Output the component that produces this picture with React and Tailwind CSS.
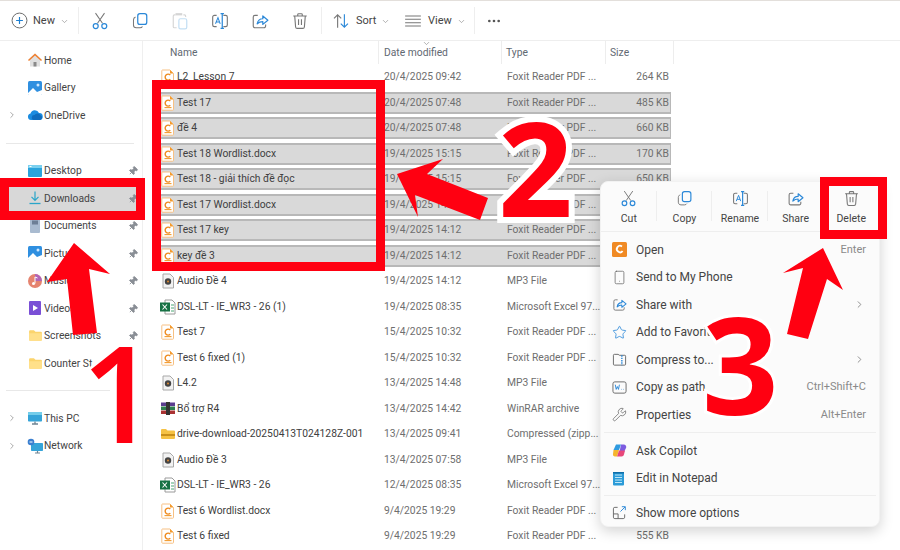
import React from "react";
import { ChevronDown, ChevronRight, Pin, Smartphone, Star, Wrench, MoreHorizontal } from "lucide-react";

const Sv = ({ s = 16, v = 16, className = "", children }) => (
  <svg width={s} height={s} viewBox={`0 0 ${v} ${v}`} fill="none" className={"shrink-0 " + className}>{children}</svg>
);

const PlusC = () => (
  <Sv s={17}><circle cx="8" cy="8" r="7" stroke="#666" strokeWidth=".9"/><path d="M8 4.800v6.400M4.800 8h6.400" stroke="#1d7fd1" strokeWidth="1.100"/></Sv>
);
const Cut = ({ s = 18 }) => (
  <Sv s={s}><path d="M4 1l6.200 9M12 1L5.800 10" stroke="#777" strokeWidth=".9"/><circle cx="4.200" cy="12.500" r="2.200" stroke="#2b88d8" strokeWidth="1.100"/><circle cx="11.800" cy="12.500" r="2.200" stroke="#2b88d8" strokeWidth="1.100"/></Sv>
);
const CopyI = ({ s = 18 }) => (
  <Sv s={s}><rect x="6" y="1.500" width="8" height="9.500" rx="2" stroke="#2b88d8" strokeWidth="1.100"/><path d="M4 4.500C2.800 5 2.200 5.800 2.200 7v4.500c0 1.500 1 2.500 2.500 2.500H8c1 0 1.800-.5 2.200-1.200" stroke="#777" strokeWidth=".9"/></Sv>
);
const Paste = () => (
  <Sv s={18}><path d="M4 2.500H3a1 1 0 0 0-1 1V13a1 1 0 0 0 1 1h2" stroke="#d5d5d5"/><path d="M4.500 2.500V1.500h5v1h-5z" stroke="#d5d5d5"/><path d="M11 2.500h1a1 1 0 0 1 1 1v1" stroke="#d5d5d5"/><rect x="7" y="6" width="7" height="9" rx="1.500" stroke="#c4dff4" strokeWidth="1.100"/></Sv>
);
const Rename = ({ s = 18 }) => (
  <Sv s={s}><path d="M5 3H3a1.500 1.500 0 0 0-1.500 1.500v7A1.500 1.500 0 0 0 3 13h2M11 3h2a1.500 1.500 0 0 1 1.500 1.500v7A1.500 1.500 0 0 1 13 13h-2" stroke="#777"/><path d="M10 1.500v13M8.500 1.500h3M8.500 14.500h3" stroke="#2b88d8" strokeWidth="1.100"/><path d="M4 10.500L6.200 5l2 5.500M4.800 8.800h2.800" stroke="#2b88d8" strokeWidth=".9"/></Sv>
);
const ShareI = ({ s = 18 }) => (
  <Sv s={s}><path d="M6 3H3.500A1.500 1.500 0 0 0 2 4.500v8A1.500 1.500 0 0 0 3.500 14h8a1.500 1.500 0 0 0 1.500-1.500V11" stroke="#777"/><path d="M5.500 10.500C6 7.500 8 6 10.500 6V3.500L15 7.300l-4.500 3.700V8.500c-2 0-3.500.5-5 2z" stroke="#2b88d8" strokeWidth="1.100" strokeLinejoin="round"/></Sv>
);
const Trash = ({ s = 18 }) => (
  <Sv s={s}><path d="M2 3.500h12M6 3.500V2.200c0-.4.3-.7.7-.7h2.600c.4 0 .7.3.7.7v1.300" stroke="#777"/><path d="M3.300 3.500l.8 9.800c.1.700.6 1.200 1.300 1.200h5.200c.7 0 1.200-.5 1.300-1.200l.8-9.800" stroke="#777"/><path d="M6.700 6.500v5M9.300 6.500v5" stroke="#777"/></Sv>
);
const SortI = () => (
  <Sv s={18}><path d="M5 14V2.500M1.800 5.700L5 2.500l3.200 3.200" stroke="#777"/><path d="M11 2v11.500M7.800 10.300l3.200 3.200 3.200-3.200" stroke="#2b88d8"/></Sv>
);
const ViewI = () => (
  <Sv s={18}><path d="M1 3.500h14M1 6.500h14M1 9.500h14M1 12.500h14" stroke="#777" strokeWidth=".9"/></Sv>
);

const Pdf = () => (
  <svg width="14" height="16" viewBox="0 0 14 16" className="shrink-0">
    <path d="M1.500 1h7.500l3.500 3.500v10a.7.7 0 0 1-.7.7H1.500a.7.7 0 0 1-.7-.7V1.700a.7.7 0 0 1 .7-.7z" fill="#fff" stroke="#f7c083"/>
    <path d="M9 1v3.500h3.500z" fill="#f39a2c"/>
    <path d="M9.300 6a3 3 0 1 0 0 4.200" fill="none" stroke="#ee8a1d" strokeWidth="1.400"/>
    <path d="M3.500 12.600h7" stroke="#f39a2c" strokeWidth="1.100"/>
  </svg>
);
const Mp3 = () => (
  <svg width="14" height="16" viewBox="0 0 14 16" className="shrink-0">
    <path d="M2 1h7l3.500 3.500v10.500H2z" fill="#f2f2f2" stroke="#a8a8a8"/>
    <circle cx="7" cy="8.500" r="3.200" fill="#444"/><circle cx="7" cy="8.500" r="1" fill="#e08a30"/>
  </svg>
);
const Xls = () => (
  <svg width="17" height="16" viewBox="0 0 17 16" className="shrink-0 -ml-[2px]">
    <path d="M6 1h7l3 3v11H6z" fill="#fff" stroke="#9a9a9a"/>
    <rect x="1" y="3.500" width="10" height="9" fill="#177245"/>
    <path d="M3.500 5.500l4.500 5M8 5.500l-4.500 5" stroke="#fff" strokeWidth="1.100"/>
    <path d="M12 6h3M12 9h3M12 12h3" stroke="#4aa874"/>
  </svg>
);
const Rar = () => (
  <svg width="16" height="15" viewBox="0 0 16 15" className="shrink-0 -ml-[1px]">
    <rect x="1" y="1.500" width="14" height="3.500" fill="#5b3c8f"/>
    <rect x="1" y="5.500" width="14" height="3.500" fill="#2f7d4f"/>
    <rect x="1" y="9.500" width="14" height="3.500" fill="#a33"/>
    <rect x="6" y="1" width="4" height="13" fill="#333"/>
  </svg>
);
const Folder = ({ s = 14 }) => (
  <svg width={s} height={s} viewBox="0 0 14 14" className="shrink-0">
    <path d="M1 3a1 1 0 0 1 1-1h3.500l1.500 1.500h5a1 1 0 0 1 1 1V11a1 1 0 0 1-1 1H2a1 1 0 0 1-1-1z" fill="#fbd46d"/>
    <path d="M1 5h12v6a1 1 0 0 1-1 1H2a1 1 0 0 1-1-1z" fill="#ffe08a"/>
  </svg>
);
const ZipFolder = () => (
  <svg width="16" height="14" viewBox="0 0 16 14" className="shrink-0 -ml-[1px]">
    <path d="M1 3a1 1 0 0 1 1-1h4l1.500 1.500H14a1 1 0 0 1 1 1V11a1 1 0 0 1-1 1H2a1 1 0 0 1-1-1z" fill="#f6c244"/>
    <rect x="1" y="7" width="14" height="2" fill="#c98f1a"/>
  </svg>
);

const HomeI = () => (
  <svg width="16" height="16" viewBox="0 0 16 16"><path d="M8 1.500L1 8h2v6.500h10V8h2z" fill="#e0e0e0"/><path d="M8 1.500L1 8l1 1 6-5.500L14 9l1-1z" fill="#f07f2e"/><rect x="6.500" y="10" width="3" height="4.500" fill="#8a8a8a"/></svg>
);
const GalleryI = () => (
  <svg width="16" height="16" viewBox="0 0 16 16"><rect x="1" y="1" width="14" height="14" rx="1.500" fill="#2f8fe0"/><path d="M1 13l5-5 4 4 5-2v4a1 1 0 0 1-1 1H2a1 1 0 0 1-1-1z" fill="#fff"/><circle cx="11" cy="5" r="1.500" fill="#cfe8ff"/></svg>
);
const CloudI = () => (
  <svg width="16" height="16" viewBox="0 0 16 16"><path d="M4 13a3.300 3.300 0 0 1-.5-6.500A4.500 4.500 0 0 1 12 6a3.500 3.500 0 0 1 .5 7z" fill="#1b8ce0"/><path d="M7 13a2.500 2.500 0 0 1 .5-5 3.500 3.500 0 0 1 6 .2A2.500 2.500 0 0 1 13 13z" fill="#0f6cbd"/></svg>
);
const DesktopI = () => (
  <svg width="16" height="14" viewBox="0 0 16 14"><rect x="1" y="1" width="14" height="12" rx="1" fill="#2aa3dc"/><rect x="1" y="1" width="14" height="3" fill="#7bd0ef"/><path d="M2.500 2.500h2" stroke="#fff"/></svg>
);
const DownI = () => (
  <svg width="16" height="16" viewBox="0 0 16 16"><path d="M8 1.500V10M4.500 6.800L8 10.300l3.500-3.500" stroke="#29a5c9" strokeWidth="1.200" fill="none"/><path d="M2.500 13.500h11" stroke="#29a5c9" strokeWidth="1.300"/></svg>
);
const DocsI = () => (
  <svg width="14" height="16" viewBox="0 0 14 16"><rect x="2" y="1" width="10" height="14" rx="1" fill="#a9bbd0"/><rect x="4" y="2.500" width="6" height="4" fill="#6d7f96"/></svg>
);
const MusicI = () => (
  <svg width="16" height="16" viewBox="0 0 16 16"><circle cx="8" cy="8" r="7" fill="#e5836f"/><path d="M8 1a7 7 0 0 1 7 7H8z" fill="#b065b8"/><circle cx="6.500" cy="10.500" r="1.500" fill="#fff"/><path d="M8 10.500V4l2.500 1" stroke="#fff" fill="none"/></svg>
);
const VideoI = () => (
  <svg width="14" height="16" viewBox="0 0 14 16"><rect x="1" y="1" width="12" height="14" rx="1" fill="#7a4fd6"/><path d="M5 5l5 3-5 3z" fill="#fff"/></svg>
);
const PcI = () => (
  <svg width="16" height="16" viewBox="0 0 16 16"><rect x="1" y="2" width="14" height="9.500" rx=".8" fill="#35a4d8"/><rect x="1" y="2" width="14" height="3" fill="#74cdea"/><path d="M5 14h6M8 11.500V14" stroke="#6f8493" strokeWidth="1.300"/></svg>
);
const NetI = () => (
  <svg width="17" height="16" viewBox="0 0 17 16"><rect x="4" y="5" width="12" height="8" rx=".8" fill="#35a4d8"/><path d="M8 15h5M10.500 13v2" stroke="#6f8493" strokeWidth="1.200"/><circle cx="4" cy="4" r="3.300" fill="#3a7fd0"/><path d="M2.500 4h3" stroke="#fff"/></svg>
);

const sideTop = [
  { t: "Home", i: <HomeI /> },
  { t: "Gallery", i: <GalleryI /> },
  { t: "OneDrive", i: <CloudI />, c: true },
];
const sideMid = [
  { t: "Desktop", i: <DesktopI />, p: true },
  { t: "Downloads", i: <DownI />, p: true, sel: true },
  { t: "Documents", i: <DocsI />, p: true },
  { t: "Pictures", i: <GalleryI />, p: true },
  { t: "Music", i: <MusicI />, p: true },
  { t: "Videos", i: <VideoI />, p: true },
  { t: "Screenshots", i: <Folder s={15} />, p: true },
  { t: "Counter St", i: <Folder s={15} /> },
];
const sideBot = [
  { t: "This PC", i: <PcI />, c: true },
  { t: "Network", i: <NetI />, c: true },
];

const SideRow = ({ t, i, c, p, sel }) => (
  <div className={"relative h-[27.5px] flex items-center text-[#444] " + (sel ? "bg-[#d8d8d8]" : "")}>
    <div className="w-[26px] flex justify-end pr-[9px]">
      {c && <ChevronRight size={10} color="#777" strokeWidth={1.5} />}
    </div>
    <div className="w-[18px] flex justify-center shrink-0">{i}</div>
    <span className="whitespace-nowrap">{t}</span>
    {p && <Pin size={10} fill="#8a8f96" color="#8a8f96" className="absolute left-[128px] top-[9px] rotate-45" />}
  </div>
);

const PF = "Foxit Reader PDF ...";
const rows = [
  ["L2_Lesson 7", "20/4/2025 09:42", PF, "264 KB", "pdf"],
  ["Test 17", "20/4/2025 07:48", PF, "485 KB", "pdf", 1],
  ["đề 4", "20/4/2025 07:48", PF, "660 KB", "pdf", 1],
  ["Test 18 Wordlist.docx", "19/4/2025 15:15", PF, "170 KB", "pdf", 1],
  ["Test 18 - giải thích đề đọc", "19/4/2025 15:15", PF, "650 KB", "pdf", 1],
  ["Test 17 Wordlist.docx", "19/4/2025 14:12", PF, "", "pdf", 1],
  ["Test 17 key", "19/4/2025 14:12", PF, "", "pdf", 1],
  ["key đề 3", "19/4/2025 14:12", PF, "", "pdf", 1],
  ["Audio Đề 4", "19/4/2025 14:12", "MP3 File", "", "mp3"],
  ["DSL-LT - IE_WR3 - 26 (1)", "19/4/2025 08:35", "Microsoft Excel 97...", "", "xls"],
  ["Test 7", "15/4/2025 10:32", PF, "", "pdf"],
  ["Test 6 fixed (1)", "15/4/2025 10:32", PF, "", "pdf"],
  ["L4.2", "13/4/2025 14:48", "MP3 File", "", "mp3"],
  ["Bổ trợ R4", "13/4/2025 14:42", "WinRAR archive", "", "rar"],
  ["drive-download-20250413T024128Z-001", "13/4/2025 09:41", "Compressed (zipp...", "", "zip"],
  ["Audio Đề 3", "13/4/2025 07:58", "MP3 File", "", "mp3"],
  ["DSL-LT - IE_WR3 - 26", "12/4/2025 08:35", "Microsoft Excel 97...", "", "xls"],
  ["Test 6 Wordlist.docx", "9/4/2025 19:29", PF, "", "pdf"],
  ["Test 6 fixed", "9/4/2025 19:29", PF, "555 KB", "pdf"],
];
const iconOf = { pdf: <Pdf />, mp3: <Mp3 />, xls: <Xls />, rar: <Rar />, zip: <ZipFolder /> };

const FileRow = ({ r }) => (
  <div className="h-[25.5px] flex items-center">
    <div className={"ml-[18px] w-[510px] h-[22px] flex items-center border-y-2 " + (r[5] ? "bg-[#d9d9d9] border-[#b8b8b8] border-r border-r-[#b8b8b8]" : "border-transparent")}>
      <div className="w-[16px] shrink-0 flex items-center">{iconOf[r[4]]}</div>
      <div className="w-[207px] shrink-0 whitespace-nowrap text-[#404040]">{r[0]}</div>
      <div className="w-[123px] shrink-0 whitespace-nowrap text-[#6e6e6e]">{r[1]}</div>
      <div className="w-[100px] shrink-0 whitespace-nowrap text-[#6e6e6e]">{r[2]}</div>
      <div className="w-[62px] shrink-0 text-right whitespace-nowrap text-[#6e6e6e]">{r[3]}</div>
    </div>
  </div>
);

const MenuTop = ({ i, t }) => (
  <div className="w-[56px] flex flex-col items-center justify-start pt-[8px] gap-[5px]">
    {i}
    <span className="text-[#444] text-[10.5px] leading-[14px]">{t}</span>
  </div>
);
const VSep = () => <div className="w-px h-[30px] mt-[9px] -ml-px bg-[#eeeeee]" />;

const FoxitI = () => (
  <svg width="15" height="15" viewBox="0 0 15 15"><rect width="15" height="15" rx="1.500" fill="#f08a24"/><path d="M10 4.500a3.200 3.200 0 1 0 .6 4.500" stroke="#fff" strokeWidth="1.800" fill="none"/></svg>
);
const CompressI = () => (
  <Sv s={15}><path d="M1.500 3.500a1 1 0 0 1 1-1h4l1.500 1h5.500a1 1 0 0 1 1 1V13a1 1 0 0 1-1 1h-11a1 1 0 0 1-1-1z" stroke="#666"/><path d="M10.500 3.500V14" stroke="#2b88d8" strokeWidth="1.500" strokeDasharray="1.500 1"/></Sv>
);
const PathI = () => (
  <Sv s={15}><rect x="1" y="2" width="14" height="12" rx="2" stroke="#666"/><path d="M3.500 5l1 5 1.200-3 1.200 3 1-5M10 10h.5M12 10h.5" stroke="#2b88d8"/></Sv>
);
const CopilotI = () => (
  <svg width="15" height="15" viewBox="0 0 15 15"><path d="M4 1.500h5L7 7H1.500z" fill="#2f9be0"/><path d="M9 1.500h2.500A2.500 2.500 0 0 1 14 5L12 9H7.500z" fill="#7c5ce0"/><path d="M1.500 7H7l-2 6.500H3A2 2 0 0 1 1 11z" fill="#f5b52e"/><path d="M7 7.500h6l-1 4a2.500 2.500 0 0 1-2.500 2H5z" fill="#e8477a"/></svg>
);
const NotepadI = () => (
  <svg width="13" height="15" viewBox="0 0 13 15"><rect x="1" y="1" width="11" height="13.500" rx="1" fill="#2b9bd8"/><path d="M3 4h7M3 6.500h7M3 9h7M3 11.500h7" stroke="#bfe7f7"/><path d="M1 1h11v1.500H1z" fill="#0f6ea8"/></svg>
);
const MoreI = () => (
  <Sv s={15}><path d="M6 2.500H3A1.500 1.500 0 0 0 1.500 4v9A1.500 1.500 0 0 0 3 14.500h9a1.500 1.500 0 0 0 1.500-1.500v-3" stroke="#666"/><path d="M1.500 9.500H6.500V14.500" stroke="#666"/><path d="M9 7l5-5M10.500 1.800h3.700v3.700" stroke="#2b88d8"/></Sv>
);

const MenuRow = ({ i, t, k, arrow }) => (
  <div className="h-[27.5px] flex items-center pl-[11px] relative text-[#444]">
    <div className="w-[24px] shrink-0 flex items-center">{i}</div>
    <span className="whitespace-nowrap text-[12px]">{t}</span>
    {k && <span className="absolute right-[13px] text-[#8a8a8a] text-[11px]">{k}</span>}
    {arrow && <ChevronRight size={11} color="#888" className="absolute right-[14px]" />}
  </div>
);

const Chev = () => <ChevronDown size={9} color="#999" className="ml-[5px] mt-[2px]" />;
const TBtn = ({ children }) => <div className="w-[40px] flex justify-center">{children}</div>;
const TSep = () => <div className="w-px h-[27px] bg-[#eeeeee]" />;

export default function App() {
  return (
    <div className="relative w-[900px] h-[550px] overflow-hidden bg-white text-[10.3px] [font-family:Roboto,sans-serif]">
      <div className="h-[41px] border-t border-t-[#e3dfdb] border-b border-b-[#eeeeee] flex items-center text-[#444] text-[11px]">
        <div className="w-[78px] flex items-center pl-[11px]">
          <PlusC /><span className="ml-[5px] mt-[2px]">New</span><Chev />
        </div>
        <TSep />
        <div className="ml-[1px] flex">
          <TBtn><Cut /></TBtn><TBtn><CopyI /></TBtn><TBtn><Paste /></TBtn><TBtn><Rename /></TBtn><TBtn><ShareI /></TBtn><TBtn><Trash /></TBtn>
        </div>
        <div className="ml-[1px]"><TSep /></div>
        <div className="flex items-center ml-[10px] w-[67px]">
          <SortI /><span className="ml-[6px] mt-[2px]">Sort</span><Chev />
        </div>
        <div className="flex items-center ml-[5px] w-[62px]">
          <ViewI /><span className="ml-[6px] mt-[2px]">View</span><Chev />
        </div>
        <div className="ml-[8px]"><TSep /></div>
        <MoreHorizontal size={16} color="#555" className="ml-[11px] mt-[1px]" />
      </div>

      <div className="flex h-[509px]">
        <aside className="w-[143px] shrink-0 border-r border-r-[#efefef] pt-[5.5px]">
          {sideTop.map((s) => <SideRow key={s.t} {...s} />)}
          <div className="h-[28px] flex items-center"><div className="ml-[6px] w-[128px] h-px bg-[#e8e8e8]" /></div>
          {sideMid.map((s) => <SideRow key={s.t} {...s} />)}
          <div className="h-[27.5px] flex items-center"><div className="ml-[6px] w-[104px] h-px bg-[#e8e8e8]" /></div>
          {sideBot.map((s) => <SideRow key={s.t} {...s} />)}
        </aside>

        <main className="flex-1 min-w-0">
          <div className="relative h-[23.25px] flex text-[#5f6972]">
            <div className="w-[236px] pl-[27px] pt-[4px] border-r border-r-[#ededed]">Name</div>
            <div className="w-[123px] pl-[5px] pt-[4px] border-r border-r-[#ededed]">Date modified</div>
            <div className="w-[104px] pl-[4px] pt-[4px] border-r border-r-[#ededed]">Type</div>
            <div className="w-[68px] pl-[4px] pt-[4px] border-r border-r-[#ededed]">Size</div>
            <ChevronDown size={9} color="#999" className="absolute left-[279px] top-[-2px]" />
          </div>
          {rows.map((r) => <FileRow key={r[0]} r={r} />)}
        </main>
      </div>

      {/* context menu */}
      <div className="absolute left-[600px] top-[181px] w-[280px] h-[346px] rounded-[8px] bg-[#fbfbfb] shadow-[0_4px_14px_rgba(0,0,0,0.18)] border border-[#f2f2f2]">
        <div className="h-[50px] flex border-b border-b-[#eeeeee]">
          <MenuTop i={<Cut s={17} />} t="Cut" /><VSep />
          <MenuTop i={<CopyI s={17} />} t="Copy" /><VSep />
          <MenuTop i={<Rename s={17} />} t="Rename" /><VSep />
          <MenuTop i={<ShareI s={17} />} t="Share" />
          <MenuTop i={<Trash s={17} />} t="Delete" />
        </div>
        <div className="pt-[4px]">
          <MenuRow i={<FoxitI />} t="Open" k="Enter" />
          <MenuRow i={<Smartphone size={15} color="#666" strokeWidth={1.2} />} t="Send to My Phone" />
          <MenuRow i={<ShareI s={15} />} t="Share with" arrow />
          <MenuRow i={<Star size={15} color="#2b88d8" strokeWidth={1.3} />} t="Add to Favorites" />
          <MenuRow i={<CompressI />} t="Compress to..." arrow />
          <MenuRow i={<PathI />} t="Copy as path" k="Ctrl+Shift+C" />
          <MenuRow i={<Wrench size={15} color="#666" strokeWidth={1.2} />} t="Properties" k="Alt+Enter" />
          <div className="h-[8.5px] flex items-center"><div className="mx-[3px] w-full h-px bg-[#eeeeee]" /></div>
          <MenuRow i={<CopilotI />} t="Ask Copilot" />
          <MenuRow i={<NotepadI />} t="Edit in Notepad" />
          <div className="h-[7px] flex items-center"><div className="mx-[3px] w-full h-px bg-[#eeeeee]" /></div>
          <MenuRow i={<MoreI />} t="Show more options" />
        </div>
      </div>

      {/* annotation frames */}
      <div className="absolute left-[0px] top-[178px] w-[145px] h-[42px] border-[#ff0011] border-[9px]" />
      <div className="absolute left-[152px] top-[80px] w-[233px] h-[191px] border-[#ff0011] border-[9px]" />
      <div className="absolute left-[820px] top-[177px] w-[67px] h-[62px] border-[#ff0011] border-[9px]" />

      {/* annotation arrows */}
      <svg width="900" height="550" viewBox="0 0 900 550" className="absolute left-0 top-0 pointer-events-none">
        <g fill="#ff0011">
          <path d="M74 243L110 274L89 269L97 333L73 335L67 279L47 282z" />
          <path d="M397 174L443 159L427 174L488 198L480 220L415 195L418 217z" />
          <path d="M823 248L843 290L827 279L808 339L787 334L803 268L783 273z" />
        </g>
      </svg>

      {/* annotation numerals */}
      <span className="absolute left-[81px] top-[316px] leading-[150px] text-[134px] font-semibold text-[#ff0011] [font-family:'Open_Sans',sans-serif] [paint-order:stroke] [-webkit-text-stroke:5px_white]">1</span>
      <span className="absolute left-[498px] top-[91px] leading-[150px] text-[131px] font-bold text-[#ff0011] [font-family:'Open_Sans',sans-serif] [paint-order:stroke] [-webkit-text-stroke:12px_white]">2</span>
      <span className="absolute left-[702px] top-[288px] leading-[150px] text-[134px] font-bold text-[#ff0011] [font-family:'Open_Sans',sans-serif] [paint-order:stroke] [-webkit-text-stroke:6px_white]">3</span>
    </div>
  );
}
